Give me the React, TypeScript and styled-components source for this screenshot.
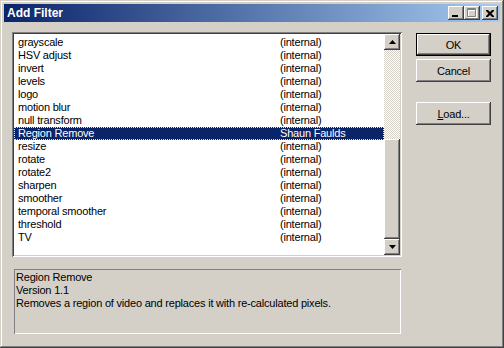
import React from "react";
import styled, { createGlobalStyle } from "styled-components";

const filters = [
  { name: "grayscale", author: "(internal)" },
  { name: "HSV adjust", author: "(internal)" },
  { name: "invert", author: "(internal)" },
  { name: "levels", author: "(internal)" },
  { name: "logo", author: "(internal)" },
  { name: "motion blur", author: "(internal)" },
  { name: "null transform", author: "(internal)" },
  { name: "Region Remove", author: "Shaun Faulds" },
  { name: "resize", author: "(internal)" },
  { name: "rotate", author: "(internal)" },
  { name: "rotate2", author: "(internal)" },
  { name: "sharpen", author: "(internal)" },
  { name: "smoother", author: "(internal)" },
  { name: "temporal smoother", author: "(internal)" },
  { name: "threshold", author: "(internal)" },
  { name: "TV", author: "(internal)" },
];

const selected = "Region Remove";

const GlobalStyle = createGlobalStyle`
  html, body {
    margin: 0;
    padding: 0;
    background: #d4d0c8;
  }
  * {
    box-sizing: border-box;
  }
`;

const raised = `
  box-shadow: inset -1px -1px #404040, inset 1px 1px #ffffff,
    inset -2px -2px #808080, inset 2px 2px #d4d0c8;
`;

export default function App() {
  return (
    <>
      <GlobalStyle />
      <Window>
        <TitleBar>
          <Title>Add Filter</Title>
          <Controls>
            <CaptionButton aria-label="Minimize">
              <svg width="8" height="7" viewBox="0 0 8 7">
                <rect x="0" y="5" width="6" height="2" fill="#000" />
              </svg>
            </CaptionButton>
            <CaptionButton aria-label="Maximize">
              <svg width="10" height="10" viewBox="0 0 10 10">
                <path d="M1.5 1.5h8v8h-8z M1.5 2.5h8" stroke="#fff" fill="none" />
                <path d="M0.5 0.5h8v8h-8z M0.5 1.5h8" stroke="#808080" fill="none" />
              </svg>
            </CaptionButton>
            <CloseButton aria-label="Close">
              <svg width="8" height="7" viewBox="0 0 8 7">
                <path d="M0 0h2l2 2 2-2h2v1l-2.5 2.5 2.5 2.5v1h-2l-2-2-2 2h-2v-1l2.5-2.5-2.5-2.5z" fill="#000" />
              </svg>
            </CloseButton>
          </Controls>
        </TitleBar>
        <Body>
          <LeftColumn>
            <ListBox>
              <Items>
                {filters.map((f) => (
                  <Row key={f.name} $selected={f.name === selected}>
                    <span>{f.name}</span>
                    <span>{f.author}</span>
                  </Row>
                ))}
              </Items>
              <ScrollBar>
                <ArrowButton>
                  <svg width="7" height="4" viewBox="0 0 7 4">
                    <path d="M3.5 0L7 4H0z" fill="#000" />
                  </svg>
                </ArrowButton>
                <Track />
                <Thumb />
                <ArrowButton>
                  <svg width="7" height="4" viewBox="0 0 7 4">
                    <path d="M0 0h7L3.5 4z" fill="#000" />
                  </svg>
                </ArrowButton>
              </ScrollBar>
            </ListBox>
            <Description>
              <div>Region Remove</div>
              <div>Version 1.1</div>
              <div>Removes a region of video and replaces it with re-calculated pixels.</div>
            </Description>
          </LeftColumn>
          <ButtonColumn>
            <DialogButton $default>OK</DialogButton>
            <DialogButton>Cancel</DialogButton>
            <DialogButton $spaced>
              <u>L</u>oad...
            </DialogButton>
          </ButtonColumn>
        </Body>
      </Window>
    </>
  );
}

const Window = styled.div`
  width: 504px;
  height: 348px;
  padding: 4px;
  background: #d4d0c8;
  display: flex;
  flex-direction: column;
  font-family: "Liberation Sans", Arial, sans-serif;
  font-size: 11px;
  letter-spacing: -0.2px;
  color: #000;
  box-shadow: inset -1px -1px #404040, inset 1px 1px #d4d0c8,
    inset -2px -2px #808080, inset 2px 2px #ffffff;
`;

const TitleBar = styled.div`
  height: 18px;
  flex: none;
  display: flex;
  align-items: center;
  justify-content: space-between;
  padding: 0 2px 0 2px;
  background: linear-gradient(to right, #0a246a, #a6caf0);
`;

const Title = styled.div`
  color: #ffffff;
  font-weight: bold;
  font-size: 12px;
  letter-spacing: 0;
  padding-left: 1px;
`;

const Controls = styled.div`
  display: flex;
  align-items: center;
`;

const CaptionButton = styled.div`
  width: 16px;
  height: 14px;
  background: #d4d0c8;
  display: flex;
  align-items: center;
  justify-content: center;
  ${raised}
`;

const CloseButton = styled(CaptionButton)`
  margin-left: 2px;
`;

const Body = styled.div`
  flex: 1;
  display: flex;
  padding: 10px 9px 0 8px;
`;

const LeftColumn = styled.div`
  width: 390px;
  display: flex;
  flex-direction: column;
`;

const ListBox = styled.div`
  height: 225px;
  padding: 2px;
  background: #ffffff;
  display: flex;
  box-shadow: inset 1px 1px #808080, inset -1px -1px #ffffff,
    inset 2px 2px #404040, inset -2px -2px #d4d0c8;
`;

const Items = styled.div`
  flex: 1;
  padding-top: 2px;
`;

const Row = styled.div<{ $selected?: boolean }>`
  height: 13px;
  line-height: 13px;
  display: grid;
  grid-template-columns: 262px 1fr;
  padding-left: 4px;
  white-space: nowrap;
  background: ${(p) => (p.$selected ? "#0a246a" : "transparent")};
  color: ${(p) => (p.$selected ? "#ffffff" : "#000000")};
  outline: ${(p) => (p.$selected ? "1px dotted #f5f08a" : "none")};
  outline-offset: -1px;
`;

const ScrollBar = styled.div`
  width: 16px;
  display: flex;
  flex-direction: column;
`;

const ArrowButton = styled.div`
  height: 16px;
  flex: none;
  background: #d4d0c8;
  display: flex;
  align-items: center;
  justify-content: center;
  ${raised}
`;

const Track = styled.div`
  flex: 1;
  background: repeating-conic-gradient(#ffffff 0 25%, #d4d0c8 0 50%) 0 0 / 2px 2px;
`;

const Thumb = styled.div`
  height: 100px;
  flex: none;
  background: #d4d0c8;
  ${raised}
`;

const Description = styled.div`
  margin: 12px 1px 0 2px;
  height: 65px;
  padding: 2px 2px;
  line-height: 13px;
  box-shadow: inset 1px 1px #808080, inset -1px -1px #ffffff;
`;

const ButtonColumn = styled.div`
  width: 75px;
  margin-left: 14px;
  padding-top: 1px;
  display: flex;
  flex-direction: column;
  gap: 3px;
`;

const DialogButton = styled.div<{ $default?: boolean; $spaced?: boolean }>`
  height: 23px;
  display: flex;
  align-items: center;
  justify-content: center;
  background: #d4d0c8;
  margin-top: ${(p) => (p.$spaced ? "17px" : "0")};
  ${(p) =>
    p.$default
      ? `box-shadow: inset 0 0 0 1px #000000, inset -2px -2px #404040, inset 2px 2px #ffffff,
    inset -3px -3px #808080;`
      : raised}
`;
